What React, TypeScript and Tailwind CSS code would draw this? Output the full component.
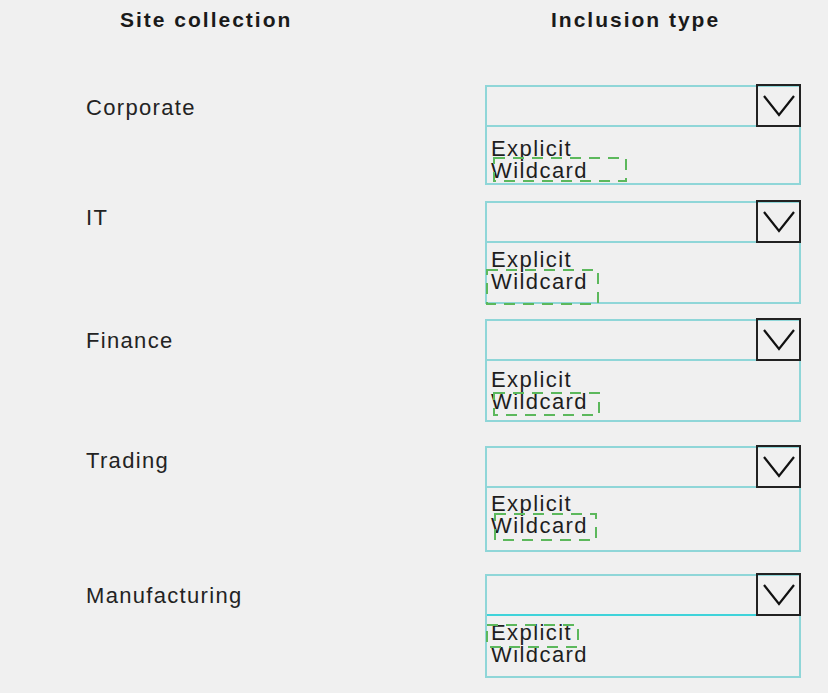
import React from 'react';

type Row = {
  label: string;
  mt: string;
  labelPt: string;
  boxH: string;
  bodyPt: string;
  // dashed focus box, relative to the dropdown's top-left
  dash: { x: number; y: number; w: number; h: number };
};

const rows: Row[] = [
  { label: 'Corporate', mt: 'mt-[53px]', labelPt: 'pt-[10px]', boxH: 'h-[100px]', bodyPt: 'pt-[11px]', dash: { x: 6, y: 70, w: 134, h: 25 } },
  { label: 'IT', mt: 'mt-[16px]', labelPt: 'pt-[4px]', boxH: 'h-[103px]', bodyPt: 'pt-[6px]', dash: { x: -1, y: 66, w: 113, h: 36 } },
  { label: 'Finance', mt: 'mt-[15px]', labelPt: 'pt-[9px]', boxH: 'h-[103px]', bodyPt: 'pt-[8px]', dash: { x: 6, y: 71, w: 107, h: 24 } },
  { label: 'Trading', mt: 'mt-[24px]', labelPt: 'pt-[2px]', boxH: 'h-[106px]', bodyPt: 'pt-[5px]', dash: { x: 7, y: 65, w: 103, h: 28 } },
  { label: 'Manufacturing', mt: 'mt-[22px]', labelPt: 'pt-[9px]', boxH: 'h-[104px]', bodyPt: 'pt-[6px]', dash: { x: -1, y: 48, w: 93, h: 24 } },
];

function Chevron() {
  return (
    <div className="-mr-[2px] -mt-[3px] flex h-[43px] w-[45px] shrink-0 items-center justify-center border-2 border-[#222]">
      <svg width="32" height="22" viewBox="0 0 32 22" fill="none">
        <path d="M1 1 L16 20 L31 1" stroke="#111" strokeWidth="2.2" strokeLinejoin="miter" />
      </svg>
    </div>
  );
}

function DashBox({ x, y, w, h }: Row['dash']) {
  return (
    <svg
      className="pointer-events-none absolute overflow-visible"
      style={{ left: x, top: y, width: w, height: h }}
      width={w}
      height={h}
    >
      <rect x="1" y="1" width={w - 2} height={h - 2} fill="none" stroke="#5cb85c" strokeWidth="2" strokeDasharray="11 8" />
    </svg>
  );
}

function Dropdown({ row, last }: { row: Row; last: boolean }) {
  return (
    <div className={`relative w-[316px] ${row.boxH} flex flex-col border-2 border-[#8fd6d8]`}>
      <div className={`flex h-[40px] shrink-0 justify-end border-b-2 ${last ? 'border-[#3fd3da]' : 'border-[#8fd6d8]'}`}>
        <Chevron />
      </div>
      <div className={`flex-1 pl-[4px] ${row.bodyPt} text-[22px] leading-[22px] tracking-[0.065em] text-[#1e1e1e]`}>
        <div>Explicit</div>
        <div>Wildcard</div>
      </div>
      <DashBox {...row.dash} />
    </div>
  );
}

export default function App() {
  return (
    <div className="h-[693px] w-[828px] overflow-hidden bg-[#f0f0f0] font-['Liberation_Sans',Arial,sans-serif]">
      <div className="flex pt-[8px] text-[21px] font-bold leading-[24px] tracking-[0.095em] text-[#1a1a1a]">
        <div className="w-[551px] pl-[120px]">Site collection</div>
        <div>Inclusion type</div>
      </div>

      <div className="flex flex-col">
        {rows.map((row, i) => (
          <div key={row.label} className={`flex ${row.mt}`}>
            <div className={`w-[485px] pl-[86px] ${row.labelPt} text-[22px] leading-[26px] tracking-[0.06em] text-[#232323]`}>
              {row.label}
            </div>
            <Dropdown row={row} last={i === rows.length - 1} />
          </div>
        ))}
      </div>
    </div>
  );
}
